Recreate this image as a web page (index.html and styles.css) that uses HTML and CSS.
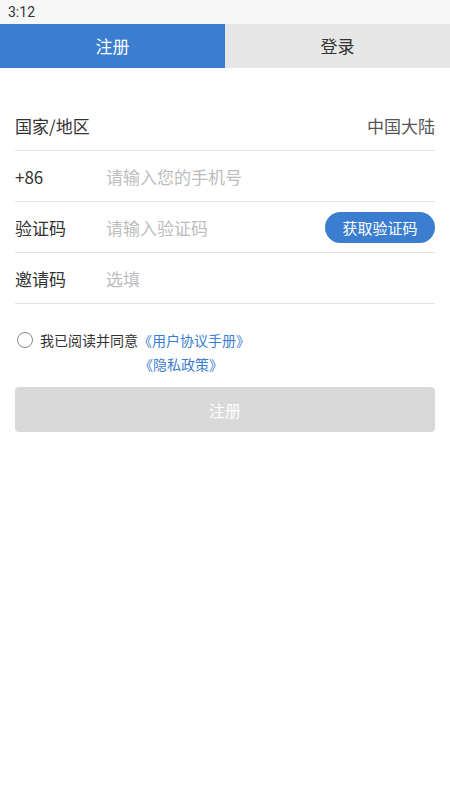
FILE: index.html
```html
<!DOCTYPE html>
<html lang="zh-CN">
<head>
  <meta charset="UTF-8" />
  <meta name="viewport" content="width=device-width, initial-scale=1.0"/>
  <title>注册</title>
  <link rel="stylesheet" href="styles.css">
</head>
<body>

  <div class="status-bar">3:12</div>

  <div class="tabs">
    <div class="tab active">注册</div>
    <div class="tab">登录</div>
  </div>

  <form class="reg-form">
    <div class="row">
      <span class="label">国家/地区</span>
      <span class="value">中国大陆</span>
    </div>
    <div class="row">
      <span class="label">+86</span>
      <input type="text" class="field" placeholder="请输入您的手机号" />
    </div>
    <div class="row">
      <span class="label">验证码</span>
      <input type="text" class="field" placeholder="请输入验证码" />
      <button type="button" class="code-btn">获取验证码</button>
    </div>
    <div class="row">
      <span class="label">邀请码</span>
      <input type="text" class="field" placeholder="选填" />
    </div>

    <div class="agree">
      <span class="radio"></span>
      <span class="agree-text">我已阅读并同意</span>
      <div class="links">
        <a href="#">《用户协议手册》</a>
        <a href="#" class="indent">《隐私政策》</a>
      </div>
    </div>

    <button type="submit" class="submit-btn">注册</button>
  </form>

</body>
</html>
```

FILE: styles.css
```css
body {
  margin: 0;
  font-family: "Noto Sans CJK SC", Roboto, sans-serif;
  background: #fff;
  color: #333;
}
.status-bar {
  height: 24px;
  line-height: 24px;
  padding-left: 8px;
  font-family: Roboto, sans-serif;
  font-size: 14px;
  color: #333;
  background: #f7f7f7;
}
.tabs {
  display: flex;
  height: 44px;
}
.tab {
  flex: 1;
  display: flex;
  align-items: center;
  justify-content: center;
  font-size: 17px;
  background: #e7e7e7;
  color: #333;
  padding-bottom: 1px;
}
.tab.active {
  background: #3b7ed0;
  color: #fff;
}
.reg-form {
  padding: 32px 15px 0;
}
.row {
  display: flex;
  align-items: center;
  height: 50px;
  border-bottom: 1px solid #e3e3e3;
}
.label {
  width: 91px;
  font-size: 17px;
  color: #333;
  flex-shrink: 0;
}
.value {
  margin-left: auto;
  font-size: 17px;
  color: #555;
}
.field {
  flex: 1;
  min-width: 0;
  border: none;
  outline: none;
  padding: 0;
  font-family: inherit;
  font-size: 17px;
  color: #333;
  background: transparent;
}
.field::placeholder {
  color: #bdbdbd;
}
.code-btn {
  height: 31px;
  width: 110px;
  border: none;
  border-radius: 16px;
  background: #3b7ed0;
  color: #fff;
  font-family: inherit;
  font-size: 15px;
  padding: 0;
}
.agree {
  display: flex;
  align-items: flex-start;
  margin-top: 24px;
  font-size: 14px;
  line-height: 24px;
}
.radio {
  width: 14px;
  height: 14px;
  border: 1.3px solid #888;
  border-radius: 50%;
  margin: 4px 7px 0 2px;
  flex-shrink: 0;
}
.agree-text {
  color: #333;
}
.links {
  display: flex;
  flex-direction: column;
  align-items: flex-start;
}
.links a {
  color: #3b7ed0;
  text-decoration: none;
}
.links .indent {
  margin-left: 1px;
}
.submit-btn {
  display: block;
  width: 100%;
  height: 45px;
  margin-top: 11px;
  border: none;
  border-radius: 4px;
  background: #d9d9d9;
  color: #fff;
  font-family: inherit;
  font-size: 16px;
}
```
